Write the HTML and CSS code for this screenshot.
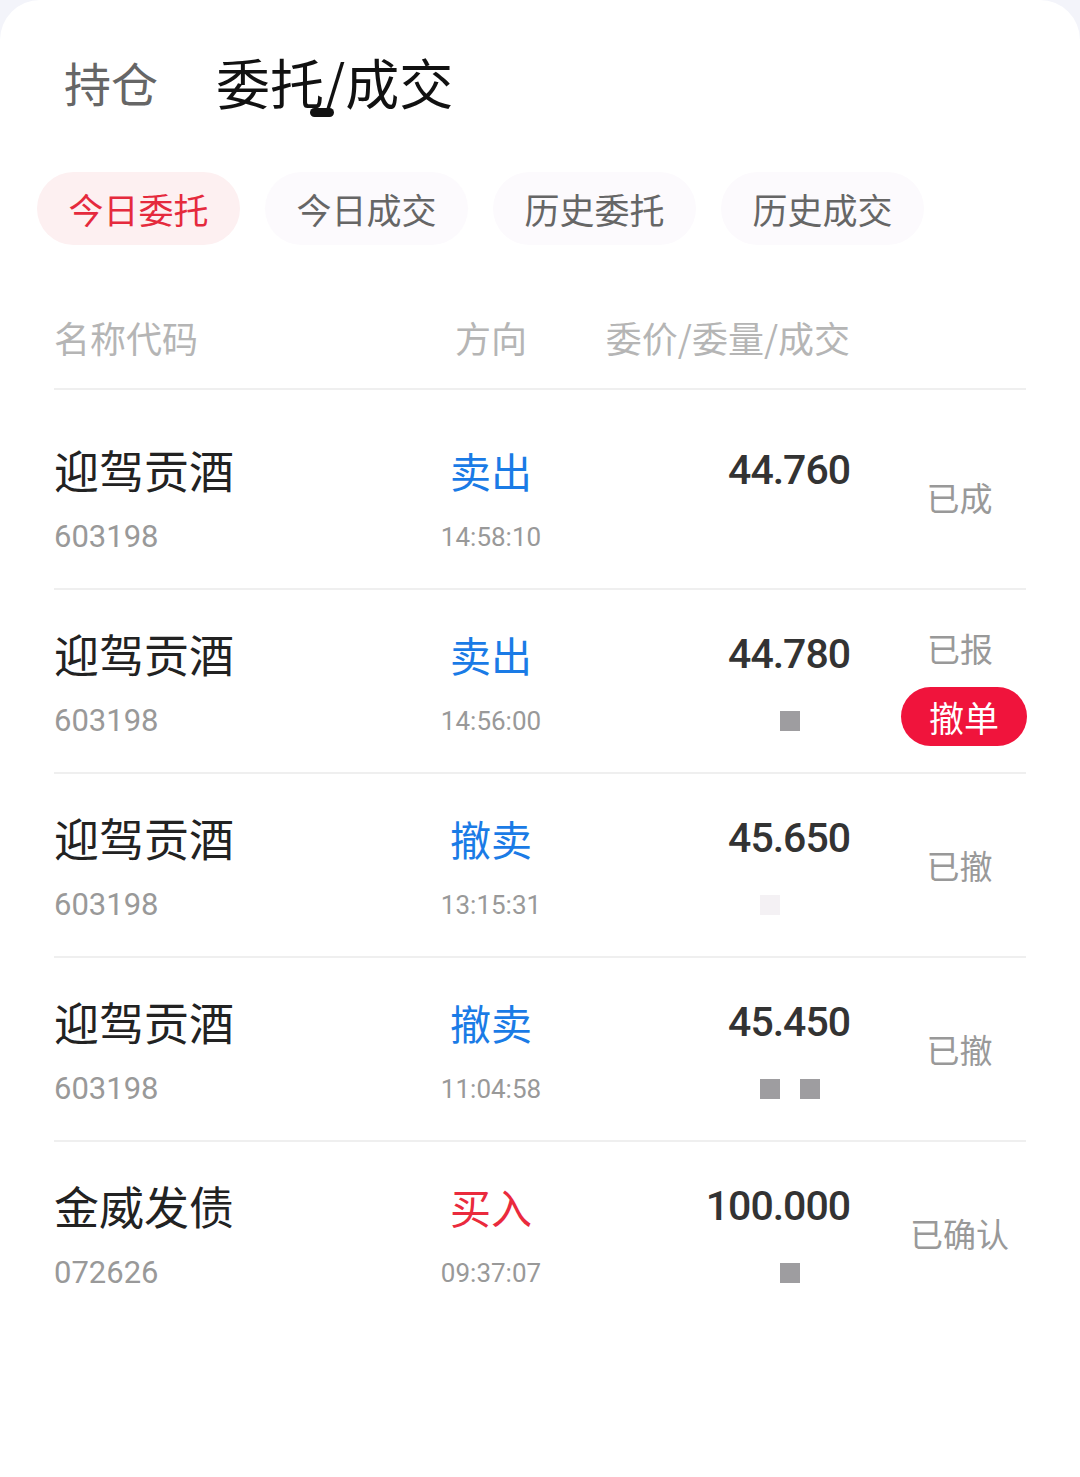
FILE: index.html
```html
<!DOCTYPE html>
<html lang="zh-CN">
<head>
    <meta charset="UTF-8">
    <meta name="viewport" content="width=device-width, initial-scale=1.0">
    <title>委托/成交</title>
    <link rel="stylesheet" href="styles.css">
</head>
<body>
    <div class="page">
        <!-- top tabs -->
        <div class="tabs">
            <span class="tab">持仓</span>
            <span class="tab active">委托/成交</span>
        </div>

        <!-- filter pills -->
        <div class="filters">
            <span class="pill on">今日委托</span>
            <span class="pill">今日成交</span>
            <span class="pill">历史委托</span>
            <span class="pill">历史成交</span>
        </div>

        <div class="table">
            <div class="row head">
                <div class="c-name">名称代码</div>
                <div class="c-dir">方向</div>
                <div class="c-price">委价/委量/成交</div>
                <div class="c-status"></div>
            </div>

            <div class="list">
                <div class="row">
                    <div class="c-name">
                        <div class="main">迎驾贡酒</div>
                        <div class="sub num">603198</div>
                    </div>
                    <div class="c-dir">
                        <div class="main sell">卖出</div>
                        <div class="sub num">14:58:10</div>
                    </div>
                    <div class="c-price">
                        <div class="main num">44.760</div>
                        <div class="qty"></div>
                    </div>
                    <div class="c-status">已成</div>
                </div>

                <div class="row">
                    <div class="c-name">
                        <div class="main">迎驾贡酒</div>
                        <div class="sub num">603198</div>
                    </div>
                    <div class="c-dir">
                        <div class="main sell">卖出</div>
                        <div class="sub num">14:56:00</div>
                    </div>
                    <div class="c-price">
                        <div class="main num">44.780</div>
                        <div class="qty"><i class="blk"></i><i class="end"></i></div>
                    </div>
                    <div class="c-status stack">
                        <div>已报</div>
                        <button class="cancel">撤单</button>
                    </div>
                </div>

                <div class="row">
                    <div class="c-name">
                        <div class="main">迎驾贡酒</div>
                        <div class="sub num">603198</div>
                    </div>
                    <div class="c-dir">
                        <div class="main sell">撤卖</div>
                        <div class="sub num">13:15:31</div>
                    </div>
                    <div class="c-price">
                        <div class="main num">45.650</div>
                        <div class="qty"><i class="blk pale"></i><i class="end wide"></i></div>
                    </div>
                    <div class="c-status">已撤</div>
                </div>

                <div class="row">
                    <div class="c-name">
                        <div class="main">迎驾贡酒</div>
                        <div class="sub num">603198</div>
                    </div>
                    <div class="c-dir">
                        <div class="main sell">撤卖</div>
                        <div class="sub num">11:04:58</div>
                    </div>
                    <div class="c-price">
                        <div class="main num">45.450</div>
                        <div class="qty"><i class="blk"></i><i class="sp"></i><i class="blk"></i><i class="end short"></i></div>
                    </div>
                    <div class="c-status">已撤</div>
                </div>

                <div class="row">
                    <div class="c-name">
                        <div class="main">金威发债</div>
                        <div class="sub num">072626</div>
                    </div>
                    <div class="c-dir">
                        <div class="main buy">买入</div>
                        <div class="sub num">09:37:07</div>
                    </div>
                    <div class="c-price">
                        <div class="main num">100.000</div>
                        <div class="qty"><i class="blk"></i><i class="end"></i></div>
                    </div>
                    <div class="c-status">已确认</div>
                </div>
            </div>
        </div>
    </div>
</body>
</html>
```

FILE: styles.css
```css
body {
    margin: 0;
    background-color: #f3f4fa;
    font-family: "Noto Sans CJK SC", "Noto Sans", sans-serif;
}

.page {
    background-color: #fff;
    border-radius: 40px 40px 0 0;
    min-height: 1477px;
    overflow: hidden;
}

/* top tabs */
.tabs {
    display: flex;
    align-items: center;
    gap: 61px;
    padding: 52px 0 0 64px;
}

.tab {
    position: relative;
    font-size: 47px;
    line-height: 60px;
    color: #666;
}

.tab.active {
    font-size: 54px;
    color: #111;
    margin-left: -3px;
}

.tab.active::after {
    content: "";
    position: absolute;
    left: 94px;
    top: 56px;
    width: 24px;
    height: 9px;
    border-radius: 5px;
    background-color: #111;
}

/* filter pills */
.filters {
    display: flex;
    gap: 25px;
    margin-top: 60px;
    padding-left: 37px;
}

.pill {
    width: 203px;
    height: 73px;
    line-height: 73px;
    text-align: center;
    border-radius: 37px;
    font-size: 35px;
    color: #666;
    background-color: #fcfafd;
}

.pill.on {
    color: #e52a3d;
    background-color: #fdf0f1;
}

/* table */
.table {
    padding: 0 54px;
}

.row {
    display: grid;
    grid-template-columns: 341px 192px 263px 1fr;
    height: 182px;
    border-bottom: 2px solid #efefef;
}

.list .row:last-child {
    border-bottom: none;
}

.row.head {
    height: 50px;
    margin-top: 67px;
    padding-bottom: 26px;
    font-size: 36px;
    line-height: 50px;
    color: #b5b5b5;
}

.list {
    padding-top: 16px;
}

.c-name,
.c-dir,
.c-price {
    display: flex;
    flex-direction: column;
    padding-top: 36px;
}

.row.head .c-name,
.row.head .c-dir,
.row.head .c-price {
    padding-top: 0;
}

.c-dir {
    align-items: center;
}

.c-price {
    align-items: flex-end;
}

.main {
    font-size: 45px;
    line-height: 56px;
    color: #222;
}

.c-dir .main {
    font-size: 41px;
}

.c-price .main {
    font-size: 41px;
    font-weight: 500;
    letter-spacing: -1px;
    color: #333;
}

.sub {
    margin-top: 19px;
    font-size: 31px;
    line-height: 40px;
    color: #999;
}

.c-dir .sub {
    font-size: 26px;
}

.num {
    font-family: "Roboto", "Noto Sans CJK SC", sans-serif;
}

.sell {
    color: #1a7be6;
}

.main.buy {
    color: #ea2a3d;
}

/* redacted quantity */
.qty {
    display: flex;
    align-items: center;
    height: 40px;
    margin-top: 19px;
}

.qty i {
    display: block;
}

.blk {
    width: 20px;
    height: 20px;
    background-color: #9e9da0;
}

.blk.pale {
    background-color: #f4f1f4;
}

.sp {
    width: 20px;
}

.end {
    width: 50px;
}

.end.short {
    width: 30px;
}

.end.wide {
    width: 70px;
}

/* status */
.c-status {
    align-self: center;
    padding-left: 43px;
    text-align: center;
    font-size: 33px;
    line-height: 40px;
    color: #999;
}

.c-status.stack {
    align-self: start;
    display: flex;
    flex-direction: column;
    align-items: center;
    gap: 19px;
    padding-top: 38px;
}

.cancel {
    width: 126px;
    height: 59px;
    margin-left: 8px;
    border: none;
    border-radius: 30px;
    background-color: #f0143c;
    color: #fff;
    font-family: inherit;
    font-size: 35px;
    line-height: 59px;
    padding: 0;
}
```
